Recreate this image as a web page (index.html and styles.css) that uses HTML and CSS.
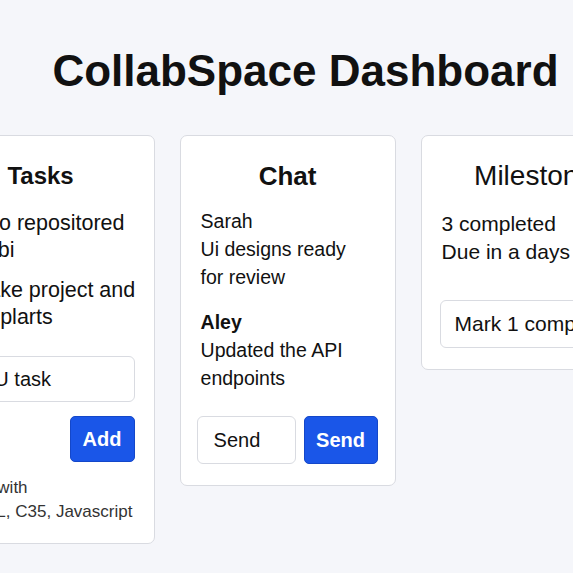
FILE: index.html
```html
<!DOCTYPE html>
<html lang="en">
<head>
    <meta charset="UTF-8">
    <title>CollabSpace Dashboard</title>
    <link rel="stylesheet" href="styles.css">
</head>
<body>
    <h1 class="page-title">CollabSpace Dashboard</h1>

    <div class="board">
        <!-- Tâches -->
        <section class="card tasks">
            <h2>Tasks</h2>
            <ul class="task-list">
                <li>Repo repositored Adobi</li>
                <li>Quake project and Templarts</li>
            </ul>
            <input class="field task-input" type="text" value="A U task">
            <div class="task-actions">
                <button class="btn-primary">Add</button>
            </div>
            <p class="stack">Built with<br>HTML, C35, Javascript</p>
        </section>

        <!-- Chat -->
        <section class="card chat">
            <h2>Chat</h2>
            <div class="message">
                <span class="author">Sarah</span>
                <p>Ui designs ready for review</p>
            </div>
            <div class="message">
                <span class="author bold">Aley</span>
                <p>Updated the API endpoints</p>
            </div>
            <div class="chat-form">
                <input class="field" type="text" value="Send">
                <button class="btn-primary">Send</button>
            </div>
        </section>

        <!-- Jalons -->
        <section class="card milestones">
            <h2>Milestones</h2>
            <p class="stats">3 completed<br>Due in a days</p>
            <button class="btn-light">Mark 1 completed</button>
        </section>
    </div>
</body>
</html>
```

FILE: styles.css
```css
body {
    font-family: "Liberation Sans", Arial, sans-serif;
    background-color: #f5f6fa;
    color: #111;
    margin: 0;
    padding: 0;
    width: 573px;
    overflow: hidden;
}
.page-title {
    margin: 45px 0 38px;
    padding-left: 38px;
    font-size: 44px;
    line-height: 52px;
    font-weight: bold;
    text-align: center;
    white-space: nowrap;
}
.board {
    display: flex;
    justify-content: center;
    align-items: flex-start;
    gap: 25px;
    padding-left: 23px;
}
.card {
    flex: 0 0 216px;
    box-sizing: border-box;
    background-color: #fff;
    border: 1px solid #d9dbe1;
    border-radius: 7px;
    padding: 25px 20px 20px;
}
.card h2 {
    margin: 0 0 16px;
    font-size: 26px;
    line-height: 30px;
    font-weight: bold;
    text-align: center;
}
.field {
    box-sizing: border-box;
    height: 46px;
    padding: 0 16px;
    font-family: inherit;
    font-size: 20px;
    color: #111;
    background-color: #fff;
    border: 1px solid #d9dbe1;
    border-radius: 6px;
    outline: none;
}
.btn-primary {
    height: 46px;
    padding: 0 14px;
    font-family: inherit;
    font-size: 20px;
    font-weight: bold;
    color: #fff;
    background-color: #1a56e8;
    border: 1px solid #1447c9;
    border-radius: 5px;
    cursor: pointer;
}
.btn-light {
    display: block;
    width: calc(100% + 3px);
    height: 48px;
    margin-left: -2px;
    padding: 0 14px;
    font-family: inherit;
    font-size: 21px;
    text-align: left;
    white-space: nowrap;
    color: #111;
    background-color: #fff;
    border: 1px solid #d9dbe1;
    border-radius: 6px;
    cursor: pointer;
}

/* Tasks */
.tasks {
    padding-bottom: 19px;
}
.tasks h2 {
    font-size: 24px;
    padding-right: 12px;
    margin-bottom: 19px;
}
.task-list {
    list-style: none;
    margin: 0 -4px 0 0;
    padding: 0;
    font-size: 21.5px;
    line-height: 27px;
}
.task-list li {
    margin-bottom: 13px;
}
.task-list li:last-child {
    margin-bottom: 0;
}
.task-input {
    display: block;
    width: calc(100% + 1px);
    margin-top: 25px;
}
.task-actions {
    display: flex;
    justify-content: flex-end;
    margin: 14px -1px 0 0;
}
.task-actions .btn-primary {
    width: 65px;
    padding: 0;
}
.stack {
    margin: 14px 0 0;
    font-size: 17px;
    line-height: 24px;
    color: #333;
}

/* Chat */
.chat {
    padding-bottom: 21px;
}
.message {
    max-width: 165px;
    font-size: 19.5px;
    line-height: 28px;
    margin-bottom: 17px;
}
.message p {
    margin: 0;
}
.author {
    display: block;
}
.author.bold {
    font-weight: bold;
}
.chat-form {
    display: flex;
    gap: 8px;
    margin: 24px -3px 0 -4px;
}
.chat-form .field {
    width: 99px;
    height: 48px;
}
.chat-form .btn-primary {
    width: 74px;
    height: 48px;
    padding: 0;
}

/* Milestones */
.milestones {
    padding-bottom: 21px;
}
.milestones h2 {
    font-size: 28px;
    font-weight: normal;
    padding-left: 4px;
    margin-bottom: 19px;
    white-space: nowrap;
}
.stats {
    margin: 0 0 34px;
    font-size: 21px;
    line-height: 28px;
}
```
